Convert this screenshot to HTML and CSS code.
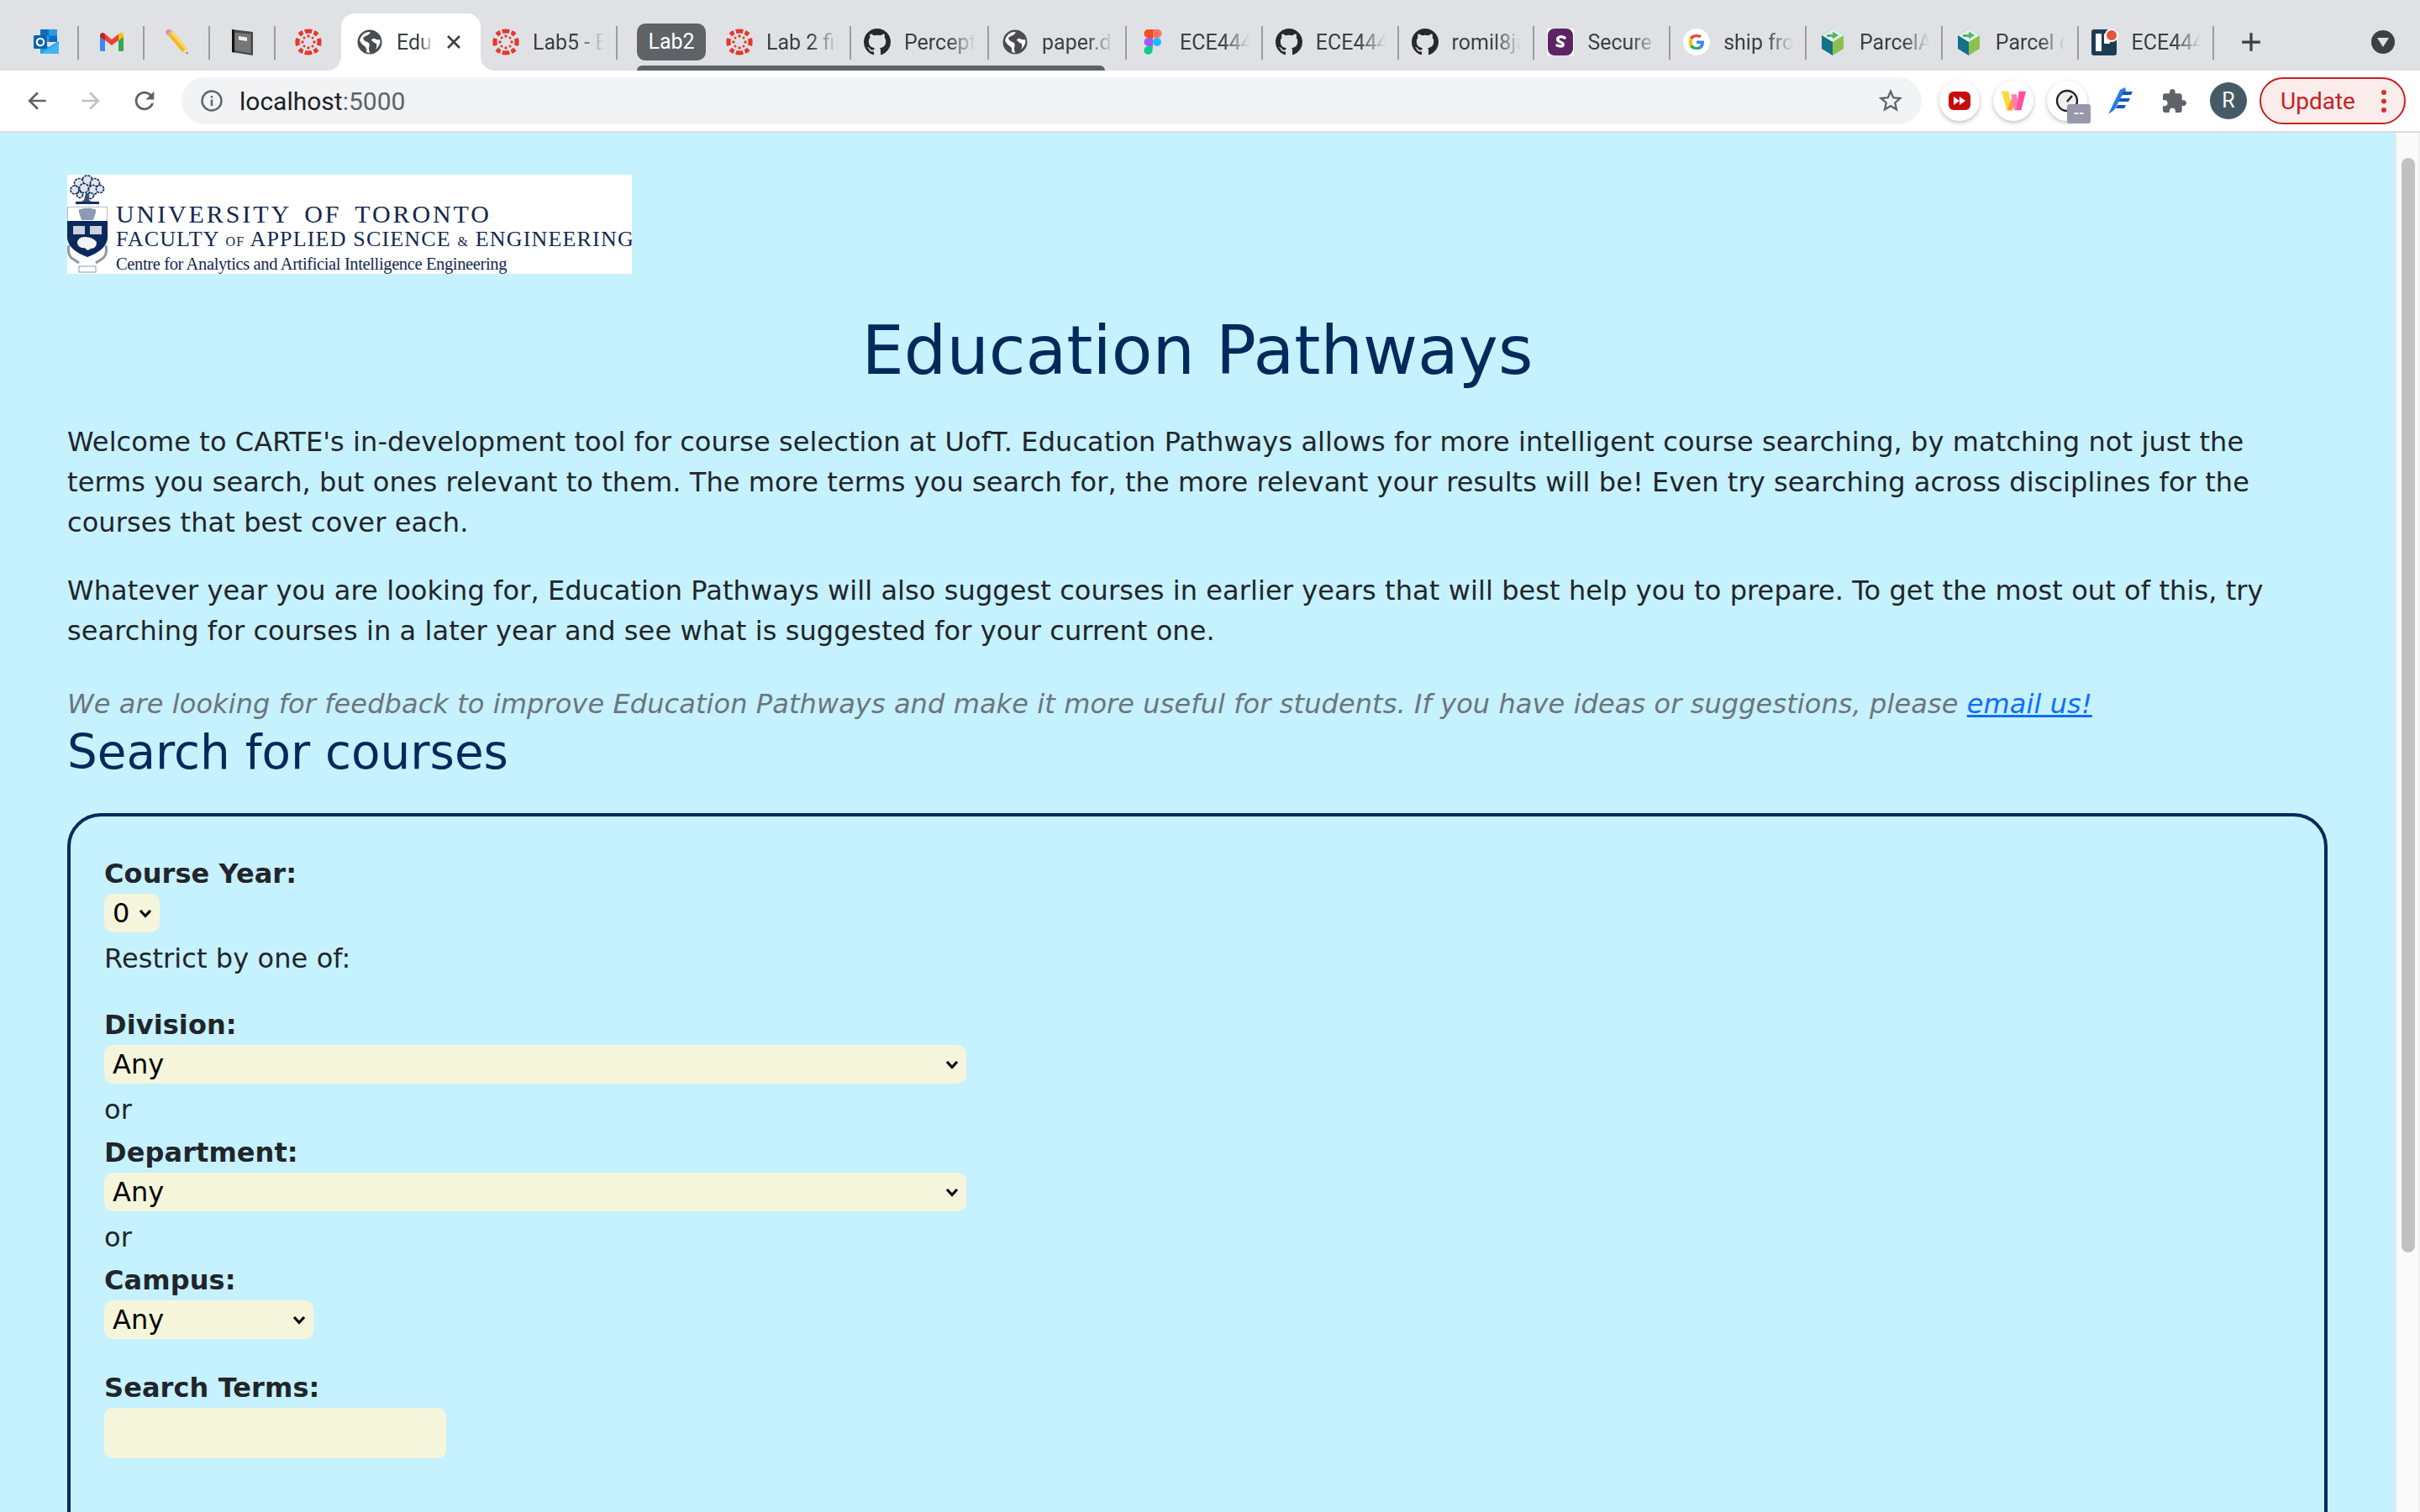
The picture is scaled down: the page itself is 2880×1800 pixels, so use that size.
FILE: index.html
```html
<!DOCTYPE html>
<html lang="en">
<head>
<meta charset="utf-8">
<title>Education Pathways</title>
<link rel="stylesheet" href="styles.css">
</head>
<body>
<svg class="defs" width="0" height="0" aria-hidden="true">
  <symbol id="i-canvas" viewBox="0 0 32 32">
    <g fill="#e4392b">
      <path d="M11 1.2Q16-.4 21 1.2L19.400 6Q16 5.200 12.600 6Z"/>
      <path d="M11 30.800Q16 32.400 21 30.800L19.400 26Q16 26.800 12.600 26Z"/>
      <path d="M1.200 11Q-.4 16 1.200 21L6 19.400Q5.200 16 6 12.600Z"/>
      <path d="M30.800 11Q32.400 16 30.800 21L26 19.400Q26.800 16 26 12.600Z"/>
      <path d="M3.500 5.500Q6 2.800 8.800 2.300L10.300 7Q8 8 7 9.500Z"/>
      <path d="M28.500 5.500Q26 2.800 23.200 2.300L21.700 7Q24 8 25 9.500Z"/>
      <path d="M3.500 26.500Q6 29.200 8.800 29.700L10.300 25Q8 24 7 22.500Z"/>
      <path d="M28.500 26.500Q26 29.200 23.200 29.700L21.700 25Q24 24 25 22.500Z"/>
      <circle cx="16" cy="9" r="1.700"/><circle cx="16" cy="23" r="1.700"/>
      <circle cx="9" cy="16" r="1.700"/><circle cx="23" cy="16" r="1.700"/>
      <circle cx="11" cy="11" r="1.500"/><circle cx="21" cy="11" r="1.500"/>
      <circle cx="11" cy="21" r="1.500"/><circle cx="21" cy="21" r="1.500"/>
    </g>
  </symbol>
  <symbol id="i-globe" viewBox="0 0 32 32">
    <circle cx="16" cy="16" r="14.500" fill="#4a4d50"/>
    <path d="M17 4Q15 8 11 9Q8 10 8 12Q10 15.500 13 16Q16.500 17 15.500 21Q14 25 16.500 29L12 28Q13 24 10 21Q6 19 4 14Q6 7 12 4.500Z" fill="#fff"/>
    <path d="M28 13Q25 14 22 12Q19 11 18 14Q21 17 24 18Q25 22 23 25Q27 22 28.500 16Z" fill="#fff"/>
  </symbol>
  <symbol id="i-github" viewBox="0 0 16 16">
    <path fill="#24292e" d="M8 0C3.580 0 0 3.580 0 8c0 3.540 2.290 6.530 5.470 7.590.4.070.55-.17.55-.38 0-.19-.01-.82-.01-1.490-2.010.37-2.530-.49-2.690-.94-.09-.23-.48-.94-.82-1.130-.28-.15-.68-.52-.01-.53.63-.01 1.080.58 1.230.82.72 1.210 1.870.87 2.330.66.07-.52.28-.87.51-1.070-1.780-.2-3.640-.89-3.640-3.950 0-.87.31-1.590.82-2.150-.08-.2-.36-1.020.08-2.120 0 0 .67-.21 2.200.82.64-.18 1.320-.27 2-.27.68 0 1.360.09 2 .27 1.530-1.040 2.200-.82 2.200-.82.44 1.100.16 1.920.08 2.120.51.56.82 1.270.82 2.150 0 3.070-1.870 3.750-3.650 3.950.29.25.54.73.54 1.480 0 1.070-.01 1.930-.01 2.200 0 .21.15.46.55.38A8.013 8.013 0 0016 8c0-4.420-3.580-8-8-8z"/>
  </symbol>
  <symbol id="i-parcel" viewBox="0 0 32 32">
    <path d="M16 0L29 8V24L16 32Z" fill="#8cc152"/>
    <path d="M16 0L3 8V24L16 32Z" fill="#13718c"/>
    <path d="M16 0L29 8L16 16L3 8Z" fill="#dff2ea"/>
    <path d="M9 7H16V3.500L23 8L16 12.500V10H9Z" fill="#58b368"/>
  </symbol>
  <symbol id="i-outlook" viewBox="0 0 32 32">
    <rect x="9" y="1" width="20" height="15" fill="#0f6cbd"/>
    <rect x="19" y="1" width="10" height="7.500" fill="#2a9be0"/>
    <rect x="9" y="8.500" width="10" height="7.500" fill="#28a8ea"/>
    <path d="M9 16L19 22L31 15V30H9Z" fill="#1aa2e8"/>
    <path d="M9 30L31 17V30Z" fill="#3fb6f2"/>
    <rect x="1" y="8" width="16" height="16" rx="1.500" fill="#0f62ae"/>
    <circle cx="9" cy="16" r="4.200" fill="none" stroke="#fff" stroke-width="2.200"/>
  </symbol>
  <symbol id="i-gmail" viewBox="0 0 32 32">
    <path d="M2 7.500V25.500Q2 27 3.500 27H8V14Z" fill="#4285f4"/>
    <path d="M30 7.500V25.500Q30 27 28.500 27H24V14Z" fill="#34a853"/>
    <path d="M2 7.500Q3 4 7 5.500L8 6.500V14L2 10Z" fill="#c5221f"/>
    <path d="M8 6.500L16 13L24 6.500V14L16 20L8 14Z" fill="#ea4335"/>
    <path d="M24 6.500L25 5.500Q29 4 30 7.500V10L24 14Z" fill="#fbbc04"/>
  </symbol>
  <symbol id="i-pencil" viewBox="0 0 32 32">
    <path d="M5 8L10 3L27 23L29 30L22 28Z" fill="#f5b81f"/>
    <path d="M8 5.500L10 3L27 23L25 25Z" fill="#ffd75a"/>
    <path d="M2 5Q2 1 6 1Q8 1 10 3L5 8Q2 7 2 5Z" fill="#e88f8f"/>
    <path d="M4 7L9 2L10.500 3.500L5.500 8.500Z" fill="#bbb"/>
    <path d="M22 28L27 23L29 30Z" fill="#f2dcb0"/>
    <path d="M27 28L29 30L26.500 29.500Z" fill="#222"/>
  </symbol>
  <symbol id="i-book" viewBox="0 0 32 32">
    <path d="M3 1L28 4V32L3 28Z" fill="#4a4a4a"/>
    <path d="M3 1L6 1.500V28.500L3 28Z" fill="#111"/>
    <path d="M6 4L26 6V30L6 26.500Z" fill="#777" stroke="#333" stroke-dasharray="1 1"/>
    <path d="M11 9L21 10.500V15L11 13.500Z" fill="#eee"/>
  </symbol>
  <symbol id="i-figma" viewBox="0 0 32 32">
    <path d="M16 1H21.500a5 5 0 010 10H16Z" fill="#ff7262"/>
    <path d="M16 1H10.500a5 5 0 000 10H16Z" fill="#f24e1e"/>
    <path d="M16 11H10.500a5 5 0 000 10H16Z" fill="#a259ff"/>
    <circle cx="21" cy="16" r="5" fill="#1abcfe"/>
    <path d="M16 21H10.500a5 5 0 105 5Z" fill="#0acf83"/>
  </symbol>
  <symbol id="i-slack" viewBox="0 0 32 32">
    <rect width="32" height="32" fill="#fff"/>
    <rect x="1" y="0" width="30" height="32" rx="8" fill="#5b2465"/>
    <path d="M21 11Q18 9 15 10Q12 11 13 14Q14 15.500 17 16.500Q20 17.500 19 20Q17 22 12 20" fill="none" stroke="#fff" stroke-width="3.400" stroke-linecap="round"/>
  </symbol>
  <symbol id="i-google" viewBox="0 0 32 32">
    <circle cx="16" cy="16" r="16" fill="#fff"/>
    <path d="M25 16.200Q25 15.200 24.800 14.400H16V18H21Q20.500 20 18.800 21.200L22 23.700Q25 21 25 16.200Z" fill="#4285f4"/>
    <path d="M16 25Q20 25 22 23.700L18.800 21.200Q17.500 22 16 22Q12.700 22 11.200 19L8 21.500Q10.500 25 16 25Z" fill="#34a853"/>
    <path d="M11.200 19Q10.400 16 11.200 13L8 10.500Q6 16 8 21.500Z" fill="#fbbc05"/>
    <path d="M16 10Q18 10 19.500 11.300L22.200 8.700Q20 7 16 7Q10.500 7 8 10.500L11.200 13Q12.700 10 16 10Z" fill="#ea4335"/>
  </symbol>
  <symbol id="i-pinboard" viewBox="0 0 32 32">
    <rect x="0" y="1" width="30" height="31" rx="3" fill="#1d3c52"/>
    <rect x="5" y="6" width="7" height="21" rx="1" fill="#fff"/>
    <rect x="15" y="6" width="7" height="12" rx="1" fill="#fff"/>
    <circle cx="24" cy="8" r="8" fill="#fff"/>
    <circle cx="24" cy="8" r="6" fill="#e8533a"/>
  </symbol>
  <symbol id="i-back" viewBox="0 0 24 24"><path d="M20 11H7.830l5.590-5.590L12 4l-8 8 8 8 1.410-1.410L7.830 13H20v-2z"/></symbol>
  <symbol id="i-reload" viewBox="0 0 24 24"><path d="M17.650 6.350C16.200 4.900 14.210 4 12 4c-4.420 0-7.990 3.580-7.990 8s3.570 8 7.990 8c3.730 0 6.840-2.550 7.730-6h-2.080c-.82 2.330-3.040 4-5.650 4-3.310 0-6-2.690-6-6s2.690-6 6-6c1.660 0 3.140.69 4.220 1.780L13 11h7V4l-2.350 2.350z"/></symbol>
</svg>

<div class="browser">
  <div class="tabstrip">
    <div class="tab pinned"><svg class="fav"><use href="#i-outlook"/></svg></div>
    <div class="tab pinned"><svg class="fav"><use href="#i-gmail"/></svg></div>
    <div class="tab pinned"><svg class="fav"><use href="#i-pencil"/></svg></div>
    <div class="tab pinned"><svg class="fav"><use href="#i-book"/></svg></div>
    <div class="tab pinned noline"><svg class="fav"><use href="#i-canvas"/></svg></div>
    <div class="tab active">
      <svg class="fav"><use href="#i-globe"/></svg>
      <span class="tab-title">Education</span>
      <svg class="tab-close" viewBox="0 0 16 16"><path d="M1 1L15 15M15 1L1 15"/></svg>
    </div>
    <div class="tab"><svg class="fav"><use href="#i-canvas"/></svg><span class="tab-title">Lab5 - ECE444</span></div>
    <div class="tab-group"><span class="group-chip">Lab2</span></div>
    <div class="tab grouped"><svg class="fav"><use href="#i-canvas"/></svg><span class="tab-title">Lab 2 file</span></div>
    <div class="tab grouped"><svg class="fav"><use href="#i-github"/></svg><span class="tab-title">Perceptron</span></div>
    <div class="tab grouped"><svg class="fav"><use href="#i-globe"/></svg><span class="tab-title">paper.dvi</span></div>
    <div class="tab"><svg class="fav"><use href="#i-figma"/></svg><span class="tab-title">ECE444 Figma</span></div>
    <div class="tab"><svg class="fav"><use href="#i-github"/></svg><span class="tab-title">ECE444 Repo</span></div>
    <div class="tab"><svg class="fav"><use href="#i-github"/></svg><span class="tab-title">romil8jain</span></div>
    <div class="tab"><svg class="fav"><use href="#i-slack"/></svg><span class="tab-title">Secure</span></div>
    <div class="tab"><svg class="fav"><use href="#i-google"/></svg><span class="tab-title">ship from</span></div>
    <div class="tab"><svg class="fav"><use href="#i-parcel"/></svg><span class="tab-title">ParcelApp</span></div>
    <div class="tab"><svg class="fav"><use href="#i-parcel"/></svg><span class="tab-title">Parcel docs</span></div>
    <div class="tab"><svg class="fav"><use href="#i-pinboard"/></svg><span class="tab-title">ECE444 Pin</span></div>
    <svg class="newtab" viewBox="0 0 24 24"><path d="M12 2V22M2 12H22"/></svg>
    <div class="tabs-menu"><span class="tabs-menu-tri"></span></div>
  </div>

  <div class="toolbar">
    <svg class="nav nav-back"><use href="#i-back"/></svg>
    <svg class="nav nav-fwd"><use href="#i-back"/></svg>
    <svg class="nav nav-reload"><use href="#i-reload"/></svg>
    <div class="omnibox">
      <svg class="omni-info" viewBox="0 0 26 26"><circle cx="13" cy="13" r="11.500"/><path d="M13 11.500V19M13 7V9.500"/></svg>
      <span class="omni-host">localhost</span><span class="omni-port">:5000</span>
      <svg class="omni-star" viewBox="0 0 24 24"><path d="M22 9.240l-7.190-.62L12 2 9.190 8.630 2 9.240l5.460 4.730L5.820 21 12 17.270 18.180 21l-1.630-7.030L22 9.240zM12 15.400l-3.760 2.270 1-4.280-3.320-2.880 4.380-.38L12 6.100l1.710 4.040 4.380.38-3.320 2.880 1 4.280L12 15.400z"/></svg>
    </div>
    <div class="ext-disc">
      <svg class="ext-img" viewBox="0 0 28 28"><rect x="1" y="3" width="26" height="22" rx="6" fill="#c70d0d"/><path d="M7 9L14 14L7 19ZM14 9L21 14L14 19Z" fill="#fff"/></svg>
    </div>
    <div class="ext-disc">
      <svg class="ext-img" viewBox="0 0 32 28"><path d="M1 2H10L15 26H8Z" fill="#ffd83a"/><path d="M8 26L16 6L20 6L15 26Z" fill="#ff9a3c"/><path d="M13 6H20L24 20L20 26H17Z" fill="#ff7fb0"/><path d="M23 2H32L26 26H20Z" fill="#ff4fa0"/></svg>
    </div>
    <div class="ext-disc speed">
      <svg class="ext-img" viewBox="0 0 28 28"><circle cx="14" cy="14" r="12" fill="#eee" stroke="#222" stroke-width="2.400"/><path d="M14 15L20 8" stroke="#222" stroke-width="2.400"/></svg>
      <span class="ext-badge">--</span>
    </div>
    <svg class="ext-feather" viewBox="0 0 30 32"><path d="M1 32L15 3L21 0L22 4L19 8L16 12L14 16L12 20L10 24L8 27Z" fill="#2a7de1"/><path d="M19 5H30L28 9H17ZM15 13H27L25 17H13ZM12 21H22L20 25H10Z" fill="#1457b8"/></svg>
    <svg class="ext-puzzle" viewBox="2 1 21 21"><path d="M20.500 11H19V7c0-1.100-.9-2-2-2h-4V3.500C13 2.120 11.880 1 10.500 1S8 2.120 8 3.500V5H4c-1.100 0-1.990.9-1.990 2v3.800H3.500c1.490 0 2.700 1.210 2.700 2.700s-1.210 2.700-2.700 2.700H2V20c0 1.100.9 2 2 2h3.800v-1.500c0-1.490 1.210-2.700 2.700-2.700 1.490 0 2.700 1.210 2.700 2.700V22H17c1.100 0 2-.9 2-2v-4h1.500c1.380 0 2.500-1.120 2.500-2.500S21.880 11 20.500 11z"/></svg>
    <div class="avatar">R</div>
    <div class="update-pill"><span>Update</span><i class="kebab"></i></div>
  </div>
</div>

<div class="viewport">
  <main class="page">
    <div class="logo">
      <svg class="crest" viewBox="0 0 48 118">
        <g fill="#dfe4ee" stroke="#15305c" stroke-width="1.700" stroke-dasharray="3 1">
          <circle cx="24" cy="7" r="6"/><circle cx="14" cy="10" r="5.500"/><circle cx="33" cy="10" r="5.500"/>
          <circle cx="9" cy="18" r="5"/><circle cx="20" cy="16" r="5.500"/><circle cx="31" cy="18" r="5.500"/><circle cx="39" cy="17" r="4.500"/>
          <circle cx="15" cy="24" r="3.500"/><circle cx="28" cy="25" r="3.500"/>
        </g>
        <path d="M22 22L20 30Q16 33 12 34H36Q29 33 26 30L26 22Z" fill="#3a4f75"/>
        <rect x="10" y="32" width="28" height="3" fill="#15305c"/>
        <rect x=".5" y="38.500" width="47" height="17" fill="#fff" stroke="#b6bccb"/>
        <path d="M14 45Q13 40 17 41Q20 39 24 40Q28 39 31 41Q35 40 34 45L31 54H17Z" fill="#8d9ab3"/>
        <path d="M0 55H48V76Q46 90 24 98Q2 90 0 76Z" fill="#0b2a5b"/>
        <rect x="7" y="61" width="14" height="10" fill="#c9d0de"/>
        <rect x="27" y="61" width="14" height="10" fill="#c9d0de"/>
        <path d="M12 82Q12 74 21 74Q30 74 35 80Q35 88 28 88Q24 92 21 87Q14 88 12 82Z" fill="#f2f3f6"/>
        <path d="M2 84Q0 94 5 99L14 105M46 84Q48 94 43 99L34 105" fill="none" stroke="#8f99ad" stroke-width="3"/>
        <rect x="14" y="109" width="20" height="7" fill="#fff" stroke="#8f99ad"/>
      </svg>
      <div class="logo-text">
        <div class="logo-l1">UNIVERSITY OF TORONTO</div>
        <div class="logo-l2">FACULTY <small>OF</small> APPLIED SCIENCE <small>&amp;</small> ENGINEERING</div>
        <div class="logo-l3">Centre for Analytics and Artificial Intelligence Engineering</div>
      </div>
    </div>
    <h1 class="title">Education Pathways</h1>
    <p class="intro">Welcome to CARTE's in-development tool for course selection at UofT. Education Pathways allows for more intelligent course searching, by matching not just the terms you search, but ones relevant to them. The more terms you search for, the more relevant your results will be! Even try searching across disciplines for the courses that best cover each.</p>
    <p class="intro">Whatever year you are looking for, Education Pathways will also suggest courses in earlier years that will best help you to prepare. To get the most out of this, try searching for courses in a later year and see what is suggested for your current one.</p>
    <p class="feedback">We are looking for feedback to improve Education Pathways and make it more useful for students. If you have ideas or suggestions, please <a href="#">email us!</a></p>
    <h2 class="subtitle">Search for courses</h2>
    <form class="search-box">
      <label class="field-label" for="year">Course Year:</label>
      <select id="year" class="sel sel-year"><option>0</option></select>
      <div class="plain restrict">Restrict by one of:</div>
      <label class="field-label" for="division">Division:</label>
      <select id="division" class="sel sel-wide"><option>Any</option></select>
      <div class="plain">or</div>
      <label class="field-label" for="department">Department:</label>
      <select id="department" class="sel sel-wide"><option>Any</option></select>
      <div class="plain">or</div>
      <label class="field-label" for="campus">Campus:</label>
      <select id="campus" class="sel sel-campus"><option>Any</option></select>
      <label class="field-label terms" for="terms">Search Terms:</label>
      <input id="terms" class="terms-input" type="text">
    </form>
  </main>
  <div class="scrollbar"><div class="scroll-thumb"></div></div>
</div>
</body>
</html>
```
FILE: styles.css
```css
* { box-sizing: border-box; }
html, body { margin: 0; height: 100%; }
body {
  width: 2880px; height: 1800px; overflow: hidden; display: flex; flex-direction: column;
  font-family: "DejaVu Sans", Verdana, sans-serif; background: #c6f1ff; color: #212529;
}
.defs { position: absolute; }

/* browser chrome */
.browser { flex: none; height: 158px; font-family: Roboto, "Liberation Sans", sans-serif; background: #fff; border-bottom: 2px solid #dadce0; }
.tabstrip { height: 84px; background: #dfe1e5; display: flex; align-items: flex-end; padding-left: 16px; position: relative; }
.tab { position: relative; flex: none; width: 161.800px; height: 68px; display: flex; align-items: center; padding: 0 16px 0 15px; gap: 16px; color: #3c4043; font-size: 25px; }
.tab::after { content: ""; position: absolute; right: 0; top: 15px; height: 40px; width: 2px; background: #9a9ca0; }
.tab.pinned { width: 78px; justify-content: center; padding: 0; }
.tab.noline::after { display: none; }
.tab.grouped { width: 164px; }
.tab.active { width: 166px; background: #fff; border-radius: 16px 16px 0 0; padding: 0 24px 0 18px; }
.tab.active::before, .tab.active::after { content: ""; position: absolute; bottom: 0; top: auto; width: 16px; height: 16px; }
.tab.active::before { left: -16px; background: radial-gradient(circle at 0 0, transparent 15.500px, #fff 16px); }
.tab.active::after { right: -16px; background: radial-gradient(circle at 100% 0, transparent 15.500px, #fff 16px); }
.active + .tab { padding-left: 14px; width: 163px; }
.fav { flex: none; width: 32px; height: 32px; }
.tab-title { flex: 1; min-width: 0; overflow: hidden; white-space: nowrap; -webkit-mask-image: linear-gradient(90deg, #000 62%, transparent 100%); mask-image: linear-gradient(90deg, #000 62%, transparent 100%); }
.tab-close { flex: none; width: 16px; height: 16px; stroke: #3c4043; stroke-width: 2.600; fill: none; }
.tab-group { flex: none; width: 114px; height: 68px; display: flex; align-items: flex-start; padding: 12px 0 0 23px; }
.group-chip { width: 82px; height: 44px; background: #5f6368; color: #fff; border-radius: 10px; font-size: 25px; line-height: 44px; text-align: center; position: relative; }
.group-chip::after { content: ""; position: absolute; left: 0; top: 50px; width: 557px; height: 6px; background: #5f6368; border-radius: 6px 6px 0 0; }
.newtab { flex: none; width: 26px; height: 26px; margin: 0 0 21px 31px; stroke: #3c4043; stroke-width: 3; fill: none; }
.tabs-menu { position: absolute; left: 2822px; top: 36px; width: 28px; height: 28px; border-radius: 50%; background: #3c4043; display: flex; align-items: center; justify-content: center; }
.tabs-menu-tri { width: 0; height: 0; border-left: 7px solid transparent; border-right: 7px solid transparent; border-top: 11px solid #dfe1e5; }

.toolbar { height: 72px; display: flex; align-items: center; padding-left: 28px; background: #fff; }
.nav { flex: none; width: 32px; height: 32px; fill: #5f6368; }
.nav-back { margin-right: 32px; }
.nav-fwd { fill: #bdc1c6; transform: scaleX(-1); margin-right: 31px; }
.nav-reload { margin-right: 27px; width: 34px; height: 34px; }
.omnibox { flex: none; width: 2071px; height: 56px; border-radius: 28px; background: #f1f3f4; display: flex; align-items: center; padding: 0 20px 0 23px; font-size: 30px; color: #202124; }
.omni-info { flex: none; width: 26px; height: 26px; margin-right: 20px; fill: none; stroke: #5f6368; stroke-width: 2.400; }
.omni-port { color: #5f6368; }
.omni-star { flex: none; width: 34px; height: 34px; margin-left: auto; fill: #5f6368; }
.ext-disc { flex: none; position: relative; width: 48px; height: 48px; margin-left: 21px; border-radius: 50%; background: #fff; box-shadow: 0 2px 5px rgba(0,0,0,.25); display: flex; align-items: center; justify-content: center; }
.ext-disc + .ext-disc { margin-left: 16px; }
.ext-img { width: 30px; height: 28px; }
.ext-badge { position: absolute; left: 24px; top: 28px; width: 28px; height: 23px; border-radius: 3px; background: #9798aa; color: #fff; font-size: 16px; font-weight: 700; text-align: center; line-height: 22px; }
.ext-feather { flex: none; width: 30px; height: 32px; margin-left: 24px; }
.ext-puzzle { flex: none; width: 28px; height: 28px; margin-left: 36px; fill: #5f6368; }
.avatar { flex: none; width: 44px; height: 44px; margin-left: 28px; border-radius: 50%; background: #455a64; color: #fff; font-size: 25px; line-height: 44px; text-align: center; }
.update-pill { flex: none; width: 174px; height: 56px; margin-left: 15px; padding-left: 23px; border: 2.500px solid #c5221f; border-radius: 28px; background: #fbecec; color: #c5221f; font-size: 28px; display: flex; align-items: center; position: relative; }
.kebab { position: absolute; left: 143px; top: 13px; width: 6px; height: 6px; border-radius: 50%; background: #d93025; box-shadow: 0 10.500px 0 #d93025, 0 21px 0 #d93025; }

/* viewport */
.viewport { flex: 1; min-height: 0; display: flex; }
.page { flex: 1; min-width: 0; overflow: hidden; padding: 50px 80px 0 80px; font-size: 32px; line-height: 48px; letter-spacing: .09px; }
.scrollbar { flex: none; width: 30px; background: #fafafa; border-left: 2px solid #e8e8e8; border-right: 2px solid #f0f0f0; padding: 30px 4px 0 6px; }
.scroll-thumb { width: 16px; height: 1303px; background: #c1c1c1; border-radius: 8px; }

/* logo */
.logo { width: 672px; height: 118px; background: #fff; display: flex; color: #13294f; font-family: "Liberation Serif", serif; overflow: hidden; letter-spacing: 0; }
.crest { flex: none; width: 48px; height: 118px; }
.logo-text { margin-left: 10px; white-space: nowrap; }
.logo-l1 { font-size: 30px; line-height: 30px; margin-top: 32px; letter-spacing: 2.900px; word-spacing: 6px; }
.logo-l2 { font-size: 26px; line-height: 26px; margin-top: 2px; letter-spacing: 1.170px; }
.logo-l2 small { font-size: 16px; }
.logo-l3 { font-size: 20.500px; line-height: 24px; margin-top: 1px; letter-spacing: -.37px; }

/* page copy */
.title { margin: 44px 0 0; font-size: 79.600px; line-height: 96px; font-weight: 400; text-align: center; color: #002a5c; letter-spacing: 0; }
.intro { margin: 36px 0 0; }
.intro + .intro { margin-top: 33px; }
.feedback { margin: 39px 0 0; font-style: italic; color: #6c757d; letter-spacing: .09px; }
.feedback a { color: #0d6efd; }
.subtitle { margin: 0; font-size: 56.400px; line-height: 68px; font-weight: 400; color: #002a5c; letter-spacing: 0; }

/* search form */
.search-box { margin-top: 38px; height: 1000px; border: 4px solid #002a5c; border-radius: 40px; padding: 44px 40px 0; display: flex; flex-direction: column; align-items: flex-start; }
.field-label { font-weight: 700; height: 48px; line-height: 48px; }
.sel {
  appearance: none; height: 46px; border: 0; border-radius: 10px; color: #000;
  font: 32px/46px "DejaVu Sans", Verdana, sans-serif; padding: 0 0 0 10px;
  background: #f5f5dc url("data:image/svg+xml,%3Csvg xmlns='http://www.w3.org/2000/svg' width='16' height='11'%3E%3Cpath d='M2 2L8 8.500L14 2' fill='none' stroke='%23000' stroke-width='3.200'/%3E%3C/svg%3E") no-repeat right 9px center;
}
.sel-year { width: 66px; }
.sel-wide { width: 1026px; }
.sel-campus { width: 249px; }
.plain { height: 48px; line-height: 48px; margin-top: 7px; }
.plain + .field-label { margin-top: 3px; }
.restrict { margin-bottom: 28px; }
.terms { margin-top: 34px; }
.terms-input { width: 407px; height: 60px; border: 0; border-radius: 10px; background: #f5f5dc; }
```
